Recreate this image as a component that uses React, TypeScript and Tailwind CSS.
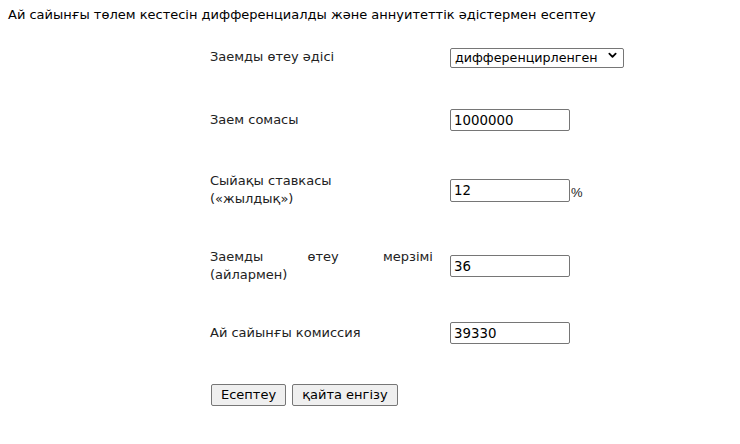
export default function App() {
  const label = "text-[13px] leading-[18px] text-[#222]";
  const input =
    "w-[120px] h-[22px] border border-[#767676] rounded-[2px] px-[3px] text-[13.33px] bg-white text-black outline-none";
  const btn =
    "h-[22px] px-[9px] border border-[#767676] rounded-[2px] bg-[#efefef] text-[13px] text-black";

  return (
    <div className="w-[740px] h-[444px] bg-white font-['DejaVu_Sans',Verdana,sans-serif] text-black">
      <div className="pl-[8px] pt-[6px] text-[13px] leading-[18px]">
        Ай сайынғы төлем кестесін дифференциалды және аннуитеттік әдістермен есептеу
      </div>

      <div className="ml-[210px] mt-[6px] flex flex-col">
        {/* method */}
        <div className="flex items-center h-[54px]">
          <div className={`w-[240px] ${label}`}>Заемды өтеу әдісі</div>
          <div className="relative">
            <select
              defaultValue="diff"
              className="appearance-none w-[174px] h-[20px] border border-[#767676] rounded-[2px] pl-[4px] pr-[20px] text-[12.7px] leading-[18px] bg-white text-black outline-none"
            >
              <option value="diff">дифференцирленген</option>
              <option value="ann">аннуитеттік</option>
            </select>
            <svg
              viewBox="0 0 10 10"
              className="absolute right-[7px] top-[6px] w-[9px] h-[9px] pointer-events-none"
            >
              <path d="M1.5 3L5 6.5L8.5 3" stroke="#000" strokeWidth="2" fill="none" strokeLinecap="round" strokeLinejoin="round" />
            </svg>
          </div>
        </div>

        {/* amount */}
        <div className="flex items-center h-[72px]">
          <div className={`w-[240px] ${label}`}>Заем сомасы</div>
          <input className={input} defaultValue="1000000" />
        </div>

        {/* rate */}
        <div className="flex items-center h-[68px]">
          <div className={`w-[240px] ${label}`}>
            Сыйақы ставкасы
            <br />
            («жылдық»)
          </div>
          <input className={`${input} h-[23px]`} defaultValue="12" />
          <span className="ml-[1px] mt-[6px] text-[13px] font-['Liberation_Sans',Arial,sans-serif] text-[#222]">%</span>
        </div>

        {/* term */}
        <div className="flex items-center h-[84px]">
          <div className={`w-[240px] ${label}`}>
            <div className="w-[223px] flex justify-between">
              <span>Заемды</span>
              <span>өтеу</span>
              <span>мерзімі</span>
            </div>
            <div>(айлармен)</div>
          </div>
          <input className={input} defaultValue="36" />
        </div>

        {/* commission */}
        <div className="flex items-center h-[50px]">
          <div className={`w-[240px] ${label}`}>Ай сайынғы комиссия</div>
          <input className={input} defaultValue="39330" />
        </div>

        {/* buttons */}
        <div className="flex items-center h-[74px] gap-[6px] pl-[1px]">
          <button className={btn}>Есептеу</button>
          <button className={`${btn} px-[8px]`}>қайта енгізу</button>
        </div>
      </div>
    </div>
  );
}
